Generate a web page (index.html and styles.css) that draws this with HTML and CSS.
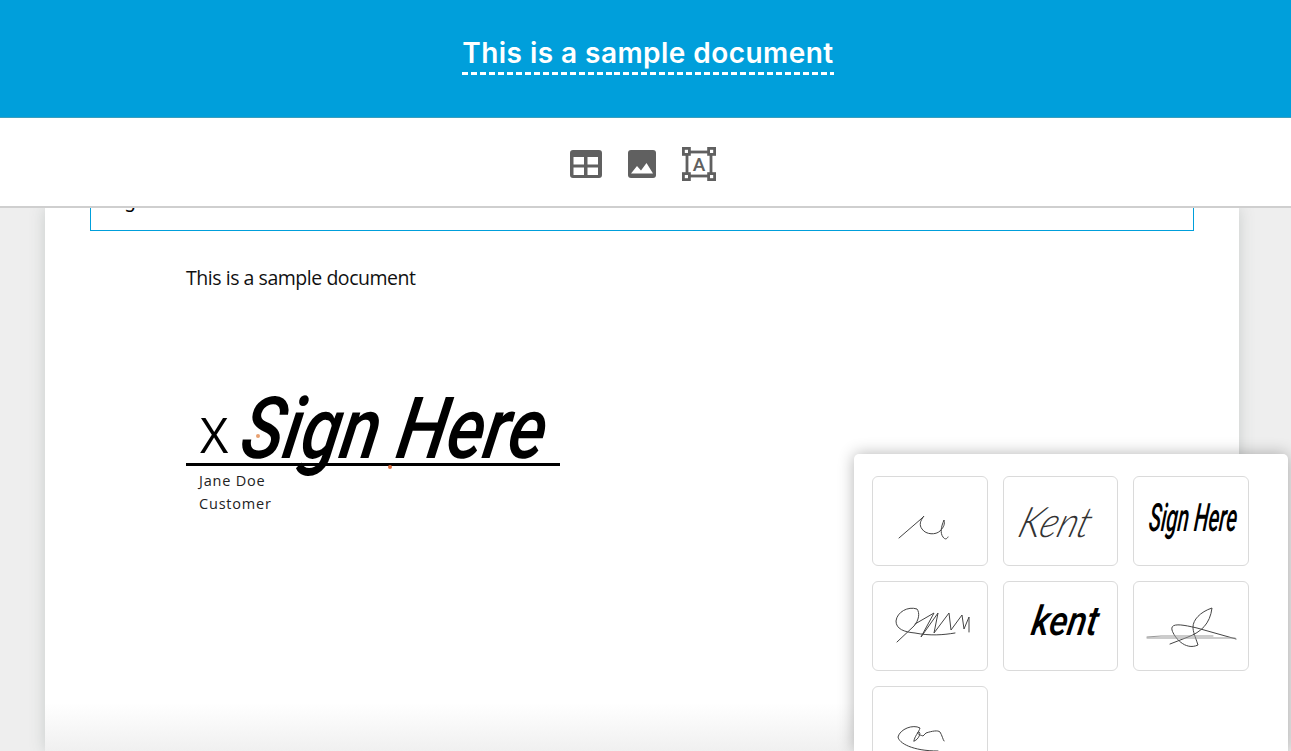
FILE: index.html
```html
<!DOCTYPE html>
<html lang="en">

<head>
	<meta charset="UTF-8">
	<meta name="viewport" content="width=device-width, initial-scale=1.0">
	<title>This is a sample document</title>
	<link rel="stylesheet" href="styles.css">
</head>

<body>
	<header class="header">
		<h1 class="title">This is a sample document</h1>
	</header>

	<nav class="toolbar">
		<!-- table -->
		<svg width="32" height="28" viewBox="0 0 32 28">
			<path fill="#606060" fill-rule="evenodd" d="M3 0h26a3 3 0 0 1 3 3v22a3 3 0 0 1-3 3H3a3 3 0 0 1-3-3V3a3 3 0 0 1 3-3zM3.500 7v7.500h10.500V7zM17.500 7v7.500h10.500V7zM3.500 17.500v7.500h10.500v-7.500zM17.500 17.500v7.500h10.500v-7.500z" />
		</svg>
		<!-- image -->
		<svg width="28" height="28" viewBox="0 0 28 28">
			<rect width="28" height="28" rx="3" fill="#606060" />
			<path fill="#fff" d="M3 23.500l6-7.500 4 4.500 5.500-7.500 6.500 10.500z" />
		</svg>
		<!-- text box -->
		<svg class="icon-text" width="34" height="34" viewBox="0 0 34 34">
			<rect x="5" y="5" width="24" height="24" fill="none" stroke="#606060" stroke-width="2.800" />
			<g fill="#fff" stroke="#606060" stroke-width="2.800">
				<rect x="1.400" y="1.400" width="6" height="6" />
				<rect x="26.600" y="1.400" width="6" height="6" />
				<rect x="1.400" y="26.600" width="6" height="6" />
				<rect x="26.600" y="26.600" width="6" height="6" />
			</g>
			<text x="17" y="23.500" text-anchor="middle">A</text>
		</svg>
	</nav>

	<main class="workspace">
		<article class="page">
			<div class="textbox">
				<p class="textbox-text">Signature and Document</p>
			</div>
			<p class="text">This is a sample document</p>
			<div class="sign">
				<div class="sign-line">
					<span class="cross">X</span>
					<svg class="ink" width="314" height="100" viewBox="0 0 314 100">
						<text class="brush" transform="translate(0 68) skewX(-10)" font-size="86" textLength="304" lengthAdjust="spacingAndGlyphs">Sign Here</text>
						<circle cx="20" cy="46" r="2" fill="#e8a070" />
						<circle cx="152" cy="77" r="2" fill="#e07040" />
					</svg>
				</div>
				<div class="signer">Jane Doe<br>Customer</div>
			</div>
		</article>
	</main>

	<aside class="panel">
		<div class="card">
			<svg viewBox="0 0 114 88">
				<path d="M26 61L48 42l3-3c-4 5-5 9-2 13 4 6 14 6 18 2 4-4 5-7 4-11-3 7-4 13-1 17 2 3 4 2 5 0" />
			</svg>
		</div>
		<div class="card">
			<svg viewBox="0 0 114 88">
				<text class="pen" transform="translate(12 60) skewX(-18)" font-size="42" textLength="71" lengthAdjust="spacingAndGlyphs">Kent</text>
			</svg>
		</div>
		<div class="card">
			<svg viewBox="0 0 114 88">
				<text class="brush" transform="translate(14 54) skewX(-6)" font-size="39" textLength="88" lengthAdjust="spacingAndGlyphs">Sign Here</text>
			</svg>
		</div>
		<div class="card">
			<svg viewBox="0 0 114 88">
				<path d="M24 60l17-16c5-6 6-13 3-17-9-3-20 3-21 12 0 8 8 11 19 12 15 3 28 2 40 0M42 42l19-11-13 24 17-24-4 20 15-20 2 17 11-15 2 14 5-12v15" />
			</svg>
		</div>
		<div class="card">
			<svg viewBox="0 0 114 88">
				<text class="brush" transform="translate(26 53) skewX(-10)" font-size="41" textLength="66" lengthAdjust="spacingAndGlyphs">kent</text>
			</svg>
		</div>
		<div class="card">
			<svg viewBox="0 0 114 88">
				<path d="M36 62l18-7c13-5 22-13 24-29-12 4-19 12-19 19 0 5 2 9 5 18-13 6-24-8-26-15-2-8 12-5 25-2l39 11" />
				<path class="faint" d="M13 55l14-1h52M13 56h88" />
			</svg>
		</div>
		<div class="card">
			<svg viewBox="0 0 114 88">
				<path d="M41 54c0-4 5-9 6-13-7-4-20 1-22 9 1 6 14 14 40 14M41 54c5-1 8-10 4-9-1 3 3 3 5 4l3-3c6-2 12-3 14-1 2 3 3 8 4 9" />
			</svg>
		</div>
	</aside>
</body>

</html>
```

FILE: styles.css
```css
* {
	box-sizing: border-box;
}

body {
	margin: 0;
	height: 100vh;
	display: flex;
	flex-direction: column;
	overflow: hidden;
	background: #eee;
	font-family: "Open Sans", sans-serif;
}

.header {
	flex: 0 0 118px;
	padding: 36px 0 0 5px;
	text-align: center;
	background: #009fdb;
	border-bottom: 1px solid #3b9ebd;
}

.title {
	display: inline-block;
	width: 372px;
	height: 39px;
	margin: 0;
	color: white;
	font: 600 28px/35px Inter, sans-serif;
	letter-spacing: 0.45px;
	white-space: nowrap;
	background: repeating-linear-gradient(90deg, white 0 6px, transparent 6px 8.970px) left bottom / 100% 3px no-repeat;
}

.toolbar {
	flex: 0 0 90px;
	display: flex;
	justify-content: center;
	align-items: center;
	gap: 26px;
	padding-top: 3px;
	padding-right: 5px;
	background: white;
	border-bottom: 2px solid #cfcfcf;
}

.icon-text text {
	fill: #606060;
	font: 500 19px Roboto, sans-serif;
}

.workspace {
	flex: 1;
	min-height: 0;
	padding: 0 52px 0 45px;
	overflow: hidden;
}

.page {
	height: 543px;
	padding: 0 45px;
	overflow: hidden;
	background: linear-gradient(white 495px, #f0f0f0);
	box-shadow: 0 0 15px #c8cccb;
}

.textbox {
	height: 23px;
	padding-left: 18px;
	border: 1px solid #009fdb;
	border-top: 0;
	overflow: hidden;
}

/* scrolled up under the toolbar */
.textbox-text {
	margin: -21px 0 0;
	font-family: "Noto Sans", sans-serif;
	font-size: 19px;
	line-height: 26px;
}

.text {
	margin: 33px 0 0 96px;
	color: #111;
	font-size: 19.500px;
	line-height: 28px;
	letter-spacing: -0.46px;
}

.sign {
	width: 374px;
	margin: 98px 0 0 96px;
}

.sign-line {
	display: flex;
	height: 76px;
	border-bottom: 3px solid black;
}

.cross {
	width: 52px;
	padding-left: 14px;
	font-size: 49px;
	font-weight: 400;
	line-height: 88px;
}

.ink {
	flex: none;
	overflow: visible;
}

.brush {
	font-family: Roboto, sans-serif;
	font-style: italic;
	font-weight: 500;
}

.signer {
	padding: 3px 0 0 13px;
	color: #222;
	font-size: 14.500px;
	line-height: 23px;
	letter-spacing: 0.8px;
}

.panel {
	position: absolute;
	left: 854px;
	top: 454px;
	width: 434px;
	height: 297px;
	display: grid;
	grid-template-columns: 116px 115px 116px;
	grid-auto-rows: 90px;
	gap: 15px;
	padding: 22px 18px 0;
	overflow: hidden;
	background: white;
	border-radius: 5px 5px 0 0;
	box-shadow: 0 0 16px rgba(0, 0, 0, 0.3);
}

.card {
	border: 1px solid #dadada;
	border-radius: 6px;
}

.card svg {
	display: block;
	width: 114px;
	height: 88px;
}

.card path {
	fill: none;
	stroke: #444;
	stroke-width: 1;
	stroke-linecap: round;
	stroke-linejoin: round;
}

.card .faint {
	stroke: #999;
}

.pen {
	fill: #333;
	font-family: Lato, sans-serif;
	font-style: italic;
	font-weight: 300;
}
```
